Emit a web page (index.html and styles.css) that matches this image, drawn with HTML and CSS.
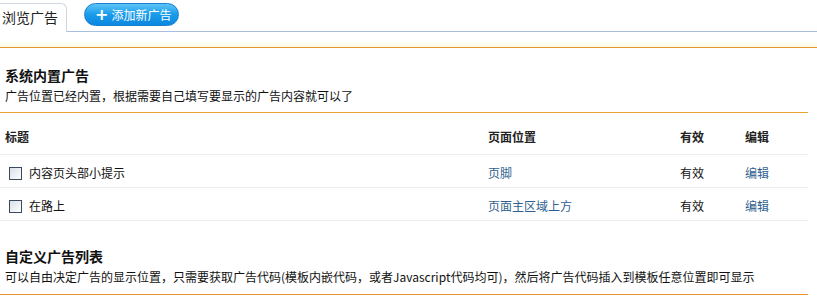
FILE: index.html
```html
<!DOCTYPE html>
<html lang="zh-CN">
<head>
    <meta charset="UTF-8">
    <title>广告管理</title>
    <link rel="stylesheet" href="styles.css">
</head>
<body>
    <div class="page">
        <div class="tabs">
            <span class="tab">浏览广告</span>
            <a class="add-btn" href="#"><span class="plus">+</span>添加新广告</a>
        </div>
        <div class="band"></div>

        <div class="section">
            <h3>系统内置广告</h3>
            <p class="desc">广告位置已经内置，根据需要自己填写要显示的广告内容就可以了</p>
        </div>

        <table class="list">
            <tr class="head">
                <th class="c-title">标题</th>
                <th class="c-pos">页面位置</th>
                <th class="c-on">有效</th>
                <th class="c-edit">编辑</th>
            </tr>
            <tr>
                <td class="c-title"><span class="check"></span>内容页头部小提示</td>
                <td class="c-pos"><a href="#">页脚</a></td>
                <td class="c-on">有效</td>
                <td class="c-edit"><a href="#">编辑</a></td>
            </tr>
            <tr>
                <td class="c-title"><span class="check"></span>在路上</td>
                <td class="c-pos"><a href="#">页面主区域上方</a></td>
                <td class="c-on">有效</td>
                <td class="c-edit"><a href="#">编辑</a></td>
            </tr>
        </table>

        <div class="section custom">
            <h3>自定义广告列表</h3>
            <p class="desc">可以自由决定广告的显示位置，只需要获取广告代码(模板内嵌代码，或者Javascript代码均可)，然后将广告代码插入到模板任意位置即可显示</p>
        </div>
    </div>
</body>
</html>
```

FILE: styles.css
```css
body {
    margin: 0;
    font-family: "Noto Sans CJK SC", "Liberation Sans", sans-serif;
    font-size: 12px;
    color: #111;
    background: #fff;
}
.page {
    width: 817px;
}
.tabs {
    display: flex;
    align-items: flex-start;
    height: 31px;
    border-bottom: 1px solid #a9bddf;
}
.tab {
    box-sizing: border-box;
    width: 67px;
    height: 29px;
    margin-top: 3px;
    padding-left: 2px;
    line-height: 26px;
    font-size: 14px;
    color: #222;
    background: #fff;
    border: 1px solid #cfd6e0;
    border-left: none;
    border-bottom: none;
    border-radius: 0 6px 0 0;
}
.add-btn {
    box-sizing: border-box;
    display: flex;
    align-items: center;
    width: 95px;
    height: 23px;
    margin: 3px 0 0 17px;
    padding-left: 10px;
    border: 1px solid #1a7fd0;
    border-radius: 12px;
    background: linear-gradient(#5cc4f6, #1a9bea 50%, #0c88e0);
    color: #fff;
    text-decoration: none;
    font-size: 12px;
    line-height: 21px;
}
.plus {
    font-size: 16px;
    font-weight: bold;
    margin-right: 3px;
    font-family: "DejaVu Sans", sans-serif;
    line-height: 21px;
}
.band {
    height: 15px;
    background: linear-gradient(#fff, #fff 60%, #fffbe0);
    border-bottom: 1px solid #e29530;
}
.section {
    width: 808px;
    padding: 17px 0 6px 5px;
    box-sizing: border-box;
    border-bottom: 1px solid #e9a236;
}
.section h3 {
    margin: 0;
    font-size: 14px;
    line-height: 20px;
    color: #111;
}
.desc {
    margin: 1px 0 0;
    line-height: 20px;
}
.custom {
    padding-top: 25px;
    padding-bottom: 7px;
    border-bottom-color: #e6952e;
}
.list {
    width: 808px;
    border-collapse: collapse;
}
.list th,
.list td {
    padding: 8px 0 4px 5px;
    line-height: 20px;
    text-align: left;
    border-bottom: 1px solid #ececec;
}
.list th {
    padding-top: 14px;
    padding-bottom: 7px;
    color: #222;
}
.c-title {
    width: 478px;
}
.c-pos {
    width: 187px;
}
.c-on {
    width: 60px;
}
.list a {
    color: #2f5f8f;
    text-decoration: none;
}
.check {
    display: inline-block;
    box-sizing: border-box;
    width: 13px;
    height: 13px;
    margin: 0 7px 0 4px;
    vertical-align: -2px;
    border: 1px solid #3a4a5c;
    background: linear-gradient(135deg, #d8e0e8, #fff);
}
```
